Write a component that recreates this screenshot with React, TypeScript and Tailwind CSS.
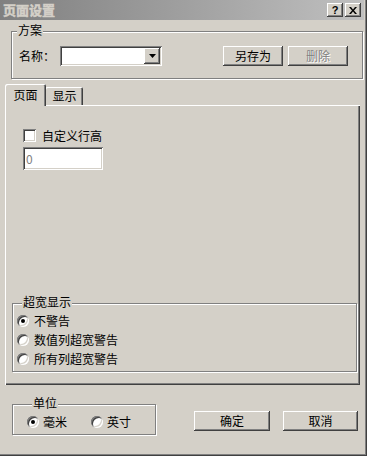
import React from "react";

const font = "font-['SimSun','Noto_Sans_CJK_SC',sans-serif]";

// classic 3D edges
const raised =
  "shadow-[inset_-1px_-1px_0_#404040,inset_1px_1px_0_#ffffff,inset_-2px_-2px_0_#808080,inset_2px_2px_0_#d4d0c8]";
const sunken =
  "shadow-[inset_1px_1px_0_#808080,inset_-1px_-1px_0_#ffffff,inset_2px_2px_0_#404040,inset_-2px_-2px_0_#d4d0c8]";

function Button({
  children,
  className = "",
  disabled = false,
}: {
  children: React.ReactNode;
  className?: string;
  disabled?: boolean;
}) {
  return (
    <div
      className={`flex items-center justify-center bg-[#d4d0c8] ${raised} ${
        disabled ? "text-[#808080] [text-shadow:1px_1px_0_#ffffff]" : "text-black"
      } ${className}`}
    >
      {children}
    </div>
  );
}

function Radio({ checked = false }: { checked?: boolean }) {
  return (
    <span
      className={`relative w-[12px] h-[12px] shrink-0 rounded-full bg-white ${sunken} flex items-center justify-center`}
    >
      {checked && <span className="w-[4px] h-[4px] rounded-full bg-black" />}
    </span>
  );
}

function Group({
  label,
  className = "",
  children,
}: {
  label: string;
  className?: string;
  children: React.ReactNode;
}) {
  return (
    <fieldset
      className={`border border-[#808080] shadow-[inset_1px_1px_0_#ffffff,1px_1px_0_#ffffff] ${className}`}
    >
      <legend className="ml-[5px] px-[1px] pb-[3px] leading-[14px] bg-[#d4d0c8]">
        {label}
      </legend>
      {children}
    </fieldset>
  );
}

export default function App() {
  return (
    <div
      className={`w-[367px] h-[456px] bg-[#d4d0c8] flex flex-col overflow-hidden text-[12px] leading-[14px] text-black ${font} shadow-[inset_-1px_-1px_0_#404040,inset_-2px_-2px_0_#808080]`}
    >
      {/* Title bar (inactive) */}
      <div className="h-[20px] mr-[3px] shrink-0 flex items-center pl-[3px] pr-[3px] bg-linear-to-r from-[#808080] to-[#c0c0c0]">
        <span className="font-bold text-[13px] text-[#d4d0c8] [-webkit-text-stroke:0.5px_#d4d0c8]">
          页面设置
        </span>
        <div className="ml-auto flex gap-[2px]">
          <Button className="w-[16px] h-[14px] font-bold text-[11px] font-['Liberation_Sans',sans-serif]">
            ?
          </Button>
          <Button className="w-[16px] h-[14px]">
            <svg width="8" height="7" viewBox="0 0 8 7">
              <path d="M0 0h2l2 2.5L6 0h2L5 3.5 8 7H6L4 4.5 2 7H0l3-3.5z" fill="#000" />
            </svg>
          </Button>
        </div>
      </div>

      {/* 方案 */}
      <Group label="方案" className="mt-[3px] ml-[11px] w-[352px] pt-[6px] pb-[12px]">
        <div className="flex items-center pl-[7px] h-[20px]">
          <span className="w-[36px]">名称：</span>
          <div className={`ml-[5px] w-[102px] h-[20px] bg-white ${sunken} flex justify-end items-center pr-[2px]`}>
            <Button className="w-[16px] h-[16px]">
              <svg width="7" height="4" viewBox="0 0 7 4">
                <path d="M0 0h7L3.5 4z" fill="#000" />
              </svg>
            </Button>
          </div>
          <Button className="ml-[61px] w-[60px] h-[20px]">另存为</Button>
          <Button disabled className="ml-[5px] w-[60px] h-[20px]">
            删除
          </Button>
        </div>
      </Group>

      {/* Tabs */}
      <div className="mt-[5px] ml-[5px] flex items-end h-[21px] shrink-0">
        <div className="relative z-10 -mb-[1px] w-[41px] h-[22px] bg-[#d4d0c8] rounded-t-[2px] flex items-center justify-center shadow-[inset_1px_1px_0_#ffffff,inset_-1px_0_0_#404040,inset_-2px_0_0_#808080]">
          页面
        </div>
        <div className="w-[38px] h-[18px] -ml-[1px] rounded-t-[2px] flex items-center justify-center pl-[1px] shadow-[inset_1px_1px_0_#ffffff,inset_-1px_0_0_#404040,inset_-2px_0_0_#808080]">
          显示
        </div>
      </div>

      {/* Tab panel */}
      <div className="ml-[5px] w-[355px] h-[280px] shrink-0 flex flex-col px-[7px] pt-[24px] shadow-[inset_1px_1px_0_#ffffff,inset_-1px_-1px_0_#404040,inset_-2px_-2px_0_#808080]">
        <div className="pl-[11px]">
          <div className="flex items-center h-[13px]">
            <span className={`w-[13px] h-[13px] bg-white ${sunken}`} />
            <span className="ml-[6px]">自定义行高</span>
          </div>
          <div className={`mt-[5px] w-[80px] h-[23px] bg-white ${sunken} flex items-center pl-[3px] text-[#808080]`}>
            0
          </div>
        </div>

        <Group label="超宽显示" className="mt-auto mb-[13px] w-[345px] pl-[4px] pb-[3px]">
          <div className="flex items-center h-[19px] -mt-[1px]">
            <Radio checked />
            <span className="ml-[5px]">不警告</span>
          </div>
          <div className="flex items-center h-[19px]">
            <Radio />
            <span className="ml-[5px]">数值列超宽警告</span>
          </div>
          <div className="flex items-center h-[19px]">
            <Radio />
            <span className="ml-[5px]">所有列超宽警告</span>
          </div>
        </Group>
      </div>

      {/* Bottom row */}
      <div className="mt-[11px] ml-[12px] flex items-start">
        <Group label="单位" className="w-[144px] pl-[14px] pb-[3px]">
          <div className="flex items-center h-[18px]">
            <Radio checked />
            <span className="ml-[4px]">毫米</span>
            <span className="ml-[24px]">
              <Radio />
            </span>
            <span className="ml-[4px]">英寸</span>
          </div>
        </Group>
        <Button className="mt-[15px] ml-[38px] w-[76px] h-[20px]">确定</Button>
        <Button className="mt-[15px] ml-[13px] w-[75px] h-[20px]">取消</Button>
      </div>
    </div>
  );
}
